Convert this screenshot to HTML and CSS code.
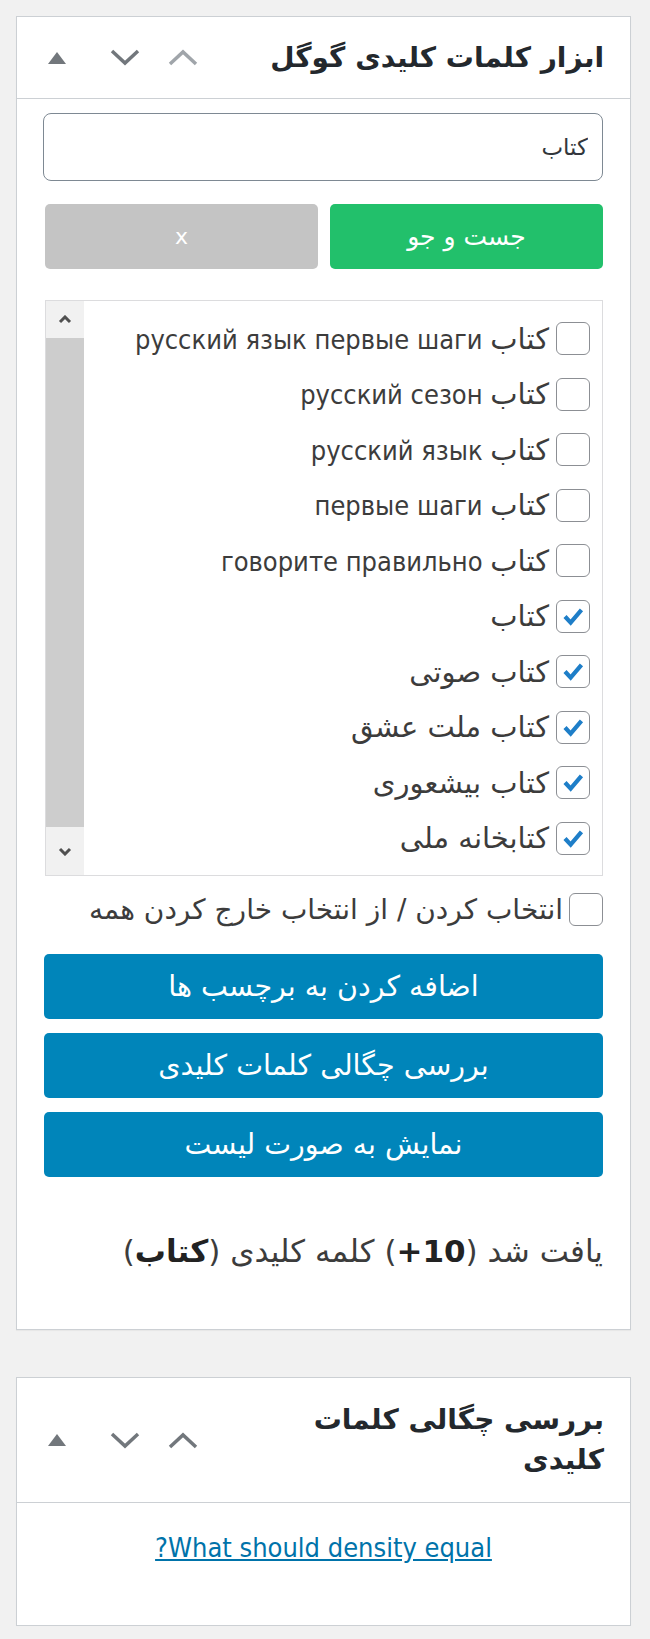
FILE: index.html
```
<!DOCTYPE html>
<html lang="fa" dir="rtl">
<head>
    <meta charset="UTF-8">
    <meta name="viewport" content="width=device-width, initial-scale=1.0">
    <title>ابزار کلمات کلیدی گوگل</title>
    <link rel="stylesheet" href="styles.css">
</head>
<body>
    <!-- Google keywords box -->
    <div class="postbox">
        <div class="postbox-header">
            <h2 class="hndle">ابزار کلمات کلیدی گوگل</h2>
            <div class="handle-actions">
                <svg class="sort-arrow" width="18" height="12" viewBox="0 0 18 12"><polygon points="9,0 18,12 0,12"/></svg>
                <svg class="chev chev-down" width="30" height="17" viewBox="0 0 30 17"><polyline points="2,2 15,14 28,2"/></svg>
                <svg class="chev chev-up" width="30" height="17" viewBox="0 0 30 17"><polyline points="2,15 15,3 28,15"/></svg>
            </div>
        </div>

        <div class="inside">
            <input type="text" class="keyword-input" value="کتاب">

            <div class="search-row">
                <button class="btn btn-search">جست و جو</button>
                <button class="btn btn-clear">x</button>
            </div>

            <div class="keyword-list">
                <ul class="keyword-items">
                    <li><span class="cb"></span><span class="label"><span class="fa">کتاب</span> русский язык первые шаги</span></li>
                    <li><span class="cb"></span><span class="label"><span class="fa">کتاب</span> русский сезон</span></li>
                    <li><span class="cb"></span><span class="label"><span class="fa">کتاب</span> русский язык</span></li>
                    <li><span class="cb"></span><span class="label"><span class="fa">کتاب</span> первые шаги</span></li>
                    <li><span class="cb"></span><span class="label"><span class="fa">کتاب</span> говорите правильно</span></li>
                    <li><span class="cb checked"><svg viewBox="0 0 33 33"><path d="M8 16.5 L14 23 L25.5 9.5"/></svg></span><span class="label fa">کتاب</span></li>
                    <li><span class="cb checked"><svg viewBox="0 0 33 33"><path d="M8 16.5 L14 23 L25.5 9.5"/></svg></span><span class="label fa">کتاب صوتی</span></li>
                    <li><span class="cb checked"><svg viewBox="0 0 33 33"><path d="M8 16.5 L14 23 L25.5 9.5"/></svg></span><span class="label fa">کتاب ملت عشق</span></li>
                    <li><span class="cb checked"><svg viewBox="0 0 33 33"><path d="M8 16.5 L14 23 L25.5 9.5"/></svg></span><span class="label fa">کتاب بیشعوری</span></li>
                    <li><span class="cb checked"><svg viewBox="0 0 33 33"><path d="M8 16.5 L14 23 L25.5 9.5"/></svg></span><span class="label fa">کتابخانه ملی</span></li>
                </ul>
                <!-- fake scrollbar -->
                <div class="scrollbar">
                    <div class="sb-btn"><svg width="14" height="9" viewBox="0 0 14 9"><polyline points="2,7 7,2 12,7"/></svg></div>
                    <div class="sb-thumb"></div>
                    <div class="sb-btn sb-bottom"><svg width="14" height="9" viewBox="0 0 14 9"><polyline points="2,2 7,7 12,2"/></svg></div>
                </div>
            </div>

            <label class="select-all"><span class="cb"></span>انتخاب کردن / از انتخاب خارج کردن همه</label>

            <div class="actions">
                <button class="btn btn-primary">اضافه کردن به برچسب ها</button>
                <button class="btn btn-primary">بررسی چگالی کلمات کلیدی</button>
                <button class="btn btn-primary">نمایش به صورت لیست</button>
            </div>

            <p class="result">یافت شد (<b>10+</b>) کلمه کلیدی (<b>کتاب</b>)</p>
        </div>
    </div>

    <!-- Keyword density box -->
    <div class="postbox">
        <div class="postbox-header header-tall">
            <h2 class="hndle">بررسی چگالی کلمات کلیدی</h2>
            <div class="handle-actions">
                <svg class="sort-arrow" width="18" height="12" viewBox="0 0 18 12"><polygon points="9,0 18,12 0,12"/></svg>
                <svg class="chev chev-down" width="30" height="17" viewBox="0 0 30 17"><polyline points="2,2 15,14 28,2"/></svg>
                <svg class="chev chev-down" width="30" height="17" viewBox="0 0 30 17"><polyline points="2,15 15,3 28,15"/></svg>
            </div>
        </div>
        <div class="inside density">
            <a href="#">What should density equal?</a>
        </div>
    </div>
</body>
</html>
```

FILE: styles.css
```
body {
    margin: 0;
    padding: 16px 19px 0 16px;
    background-color: #f1f1f1;
    font-family: "DejaVu Sans", sans-serif;
    font-stretch: condensed;
    color: #444;
}

/* Boxes */
.postbox {
    background-color: #fff;
    border: 1px solid #ccd0d4;
    box-shadow: 0 1px 1px rgba(0, 0, 0, 0.04);
}

.postbox + .postbox {
    margin-top: 47px;
}

.postbox-header {
    display: flex;
    align-items: center;
    justify-content: space-between;
    height: 81px;
    padding: 0 26px 0 31px;
    border-bottom: 1px solid #ccd0d4;
}

.header-tall {
    height: 124px;
}

.hndle {
    margin: 0;
    font-size: 28px;
    font-weight: bold;
    font-stretch: normal;
    line-height: 40px;
    color: #23282d;
    max-width: 340px;
}

/* Move / toggle icons */
.handle-actions {
    direction: ltr;
    display: flex;
    align-items: center;
}

.sort-arrow {
    fill: #72777c;
    margin-right: 44px;
}

.chev {
    fill: none;
    stroke-width: 3.5;
}

.chev-down {
    stroke: #72777c;
    margin-right: 28px;
}

.chev-up {
    stroke: #a0a5aa;
}

/* Box content */
.inside {
    padding: 14px 27px 62px 26px;
}

.keyword-input {
    display: block;
    box-sizing: border-box;
    width: 100%;
    height: 68px;
    padding: 0 14px;
    border: 1px solid #7e8993;
    border-radius: 8px;
    font-family: inherit;
    font-size: 23px;
    color: #32373c;
    direction: rtl;
}

.search-row {
    display: grid;
    grid-template-columns: 1fr 1fr;
    gap: 12px;
    margin-top: 23px;
    padding-left: 2px;
}

.btn {
    height: 65px;
    border: none;
    border-radius: 5px;
    color: #fff;
    font-family: inherit;
    font-stretch: normal;
    font-size: 28px;
    cursor: pointer;
}

.btn-search {
    background-color: #22c06b;
    font-size: 25px;
}

.btn-clear {
    background-color: #c4c4c4;
    font-size: 22px;
}

/* Keyword list with its scrollbar */
.keyword-list {
    display: flex;
    height: 574px;
    margin: 31px 0 0 2px;
    border: 1px solid #dcdcde;
}

.keyword-items {
    flex: 1;
    list-style: none;
    margin: 0;
    padding: 10px 12px 0 0;
}

.keyword-items li {
    display: flex;
    align-items: center;
    gap: 7px;
    height: 55.5px;
    font-size: 27px;
    color: #3c3c3c;
}

.keyword-items .fa {
    font-size: 29px;
    font-stretch: normal;
}

.cb {
    flex: none;
    box-sizing: border-box;
    width: 34px;
    height: 33px;
    border: 1px solid #8c8f94;
    border-radius: 6px;
    background-color: #fff;
}

.cb svg {
    display: block;
    width: 100%;
    height: 100%;
    fill: none;
    stroke: #1e7ec8;
    stroke-width: 4.5;
}

.scrollbar {
    display: flex;
    flex-direction: column;
    width: 38px;
    background-color: #f1f1f1;
}

.sb-btn {
    display: flex;
    align-items: center;
    justify-content: center;
    height: 37px;
}

.sb-bottom {
    height: 48px;
}

.sb-btn svg {
    fill: none;
    stroke: #505050;
    stroke-width: 3;
}

.sb-thumb {
    flex: 1;
    background-color: #cdcdcd;
}

.select-all {
    display: flex;
    align-items: center;
    gap: 6px;
    margin-top: 17px;
    font-size: 28px;
    font-stretch: normal;
    color: #3c3c3c;
}

.actions {
    display: flex;
    flex-direction: column;
    gap: 14px;
    margin-top: 28px;
    padding-left: 1px;
}

.btn-primary {
    background-color: #0085ba;
    font-size: 28.5px;
}

.result {
    margin: 58px 0 0;
    font-size: 31px;
    line-height: 32px;
    font-stretch: normal;
    color: #3c3c3c;
}

.result b {
    color: #222;
}

/* Density box */
.density {
    padding: 30px 0 62px;
    text-align: center;
}

.density a {
    font-size: 27px;
    line-height: 30px;
    color: #0073aa;
}
```
